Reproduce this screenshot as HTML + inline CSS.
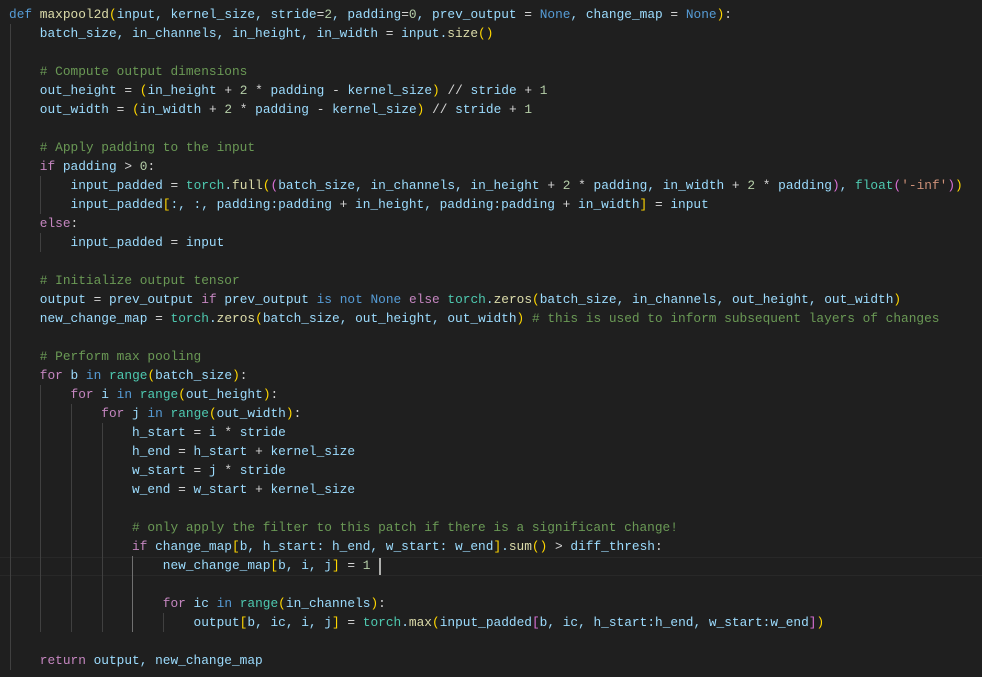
<!DOCTYPE html>
<html><head><meta charset="utf-8"><style>
body{margin:0;background:#1f1f1f;width:982px;height:677px;overflow:hidden;position:relative}
#c{position:absolute;left:9px;top:5px;font-family:"Liberation Mono",monospace;font-size:12.82px;line-height:19px;color:#9cdcfe}
.l{height:19px;white-space:pre}
.k{color:#569cd6}.p{color:#c586c0}.f{color:#dcdcaa}.t{color:#4ec9b0}.c{color:#6a9955}.n{color:#b5cea8}.s{color:#ce9178}.o{color:#d4d4d4}
.b1{color:#ffd700}.b2{color:#da70d6}.b3{color:#179fff}
.g{position:absolute;width:1px;background:#404040}
.hl{position:absolute;left:0;width:982px;top:557px;height:17px;border-top:1px solid #282828;border-bottom:1px solid #282828}
.cur{position:absolute;left:379px;top:558px;width:2px;height:17px;background:#aeafad}
</style></head><body>
<div class="hl"></div>
<div class="g" style="left:10px;top:24px;height:646px"></div>
<div class="g" style="left:40px;top:176px;height:38px"></div>
<div class="g" style="left:40px;top:233px;height:19px"></div>
<div class="g" style="left:40px;top:385px;height:247px"></div>
<div class="g" style="left:71px;top:404px;height:228px"></div>
<div class="g" style="left:102px;top:423px;height:209px"></div>
<div class="g" style="left:132px;top:556px;height:76px;background:#707070"></div>
<div class="g" style="left:163px;top:613px;height:19px"></div>
<div class="cur"></div>
<div id="c"><div class="l"><span class="k">def</span> <span class="f">maxpool2d</span><span class="b1">(</span>input, kernel_size, stride<span class="o">=</span><span class="n">2</span>, padding<span class="o">=</span><span class="n">0</span>, prev_output <span class="o">=</span> <span class="k">None</span>, change_map <span class="o">=</span> <span class="k">None</span><span class="b1">)</span><span class="o">:</span></div><div class="l">    batch_size, in_channels, in_height, in_width <span class="o">=</span> input.<span class="f">size</span><span class="b1">()</span></div><div class="l"> </div><div class="l">    <span class="c"># Compute output dimensions</span></div><div class="l">    out_height <span class="o">=</span> <span class="b1">(</span>in_height <span class="o">+</span> <span class="n">2</span> <span class="o">*</span> padding <span class="o">-</span> kernel_size<span class="b1">)</span> <span class="o">//</span> stride <span class="o">+</span> <span class="n">1</span></div><div class="l">    out_width <span class="o">=</span> <span class="b1">(</span>in_width <span class="o">+</span> <span class="n">2</span> <span class="o">*</span> padding <span class="o">-</span> kernel_size<span class="b1">)</span> <span class="o">//</span> stride <span class="o">+</span> <span class="n">1</span></div><div class="l"> </div><div class="l">    <span class="c"># Apply padding to the input</span></div><div class="l">    <span class="p">if</span> padding <span class="o">&gt;</span> <span class="n">0</span><span class="o">:</span></div><div class="l">        input_padded <span class="o">=</span> <span class="t">torch</span>.<span class="f">full</span><span class="b1">(</span><span class="b2">(</span>batch_size, in_channels, in_height <span class="o">+</span> <span class="n">2</span> <span class="o">*</span> padding, in_width <span class="o">+</span> <span class="n">2</span> <span class="o">*</span> padding<span class="b2">)</span>, <span class="t">float</span><span class="b2">(</span><span class="s">'-inf'</span><span class="b2">)</span><span class="b1">)</span></div><div class="l">        input_padded<span class="b1">[</span>:, :, padding:padding <span class="o">+</span> in_height, padding:padding <span class="o">+</span> in_width<span class="b1">]</span> <span class="o">=</span> input</div><div class="l">    <span class="p">else</span><span class="o">:</span></div><div class="l">        input_padded <span class="o">=</span> input</div><div class="l"> </div><div class="l">    <span class="c"># Initialize output tensor</span></div><div class="l">    output <span class="o">=</span> prev_output <span class="p">if</span> prev_output <span class="k">is</span> <span class="k">not</span> <span class="k">None</span> <span class="p">else</span> <span class="t">torch</span>.<span class="f">zeros</span><span class="b1">(</span>batch_size, in_channels, out_height, out_width<span class="b1">)</span></div><div class="l">    new_change_map <span class="o">=</span> <span class="t">torch</span>.<span class="f">zeros</span><span class="b1">(</span>batch_size, out_height, out_width<span class="b1">)</span> <span class="c"># this is used to inform subsequent layers of changes</span></div><div class="l"> </div><div class="l">    <span class="c"># Perform max pooling</span></div><div class="l">    <span class="p">for</span> b <span class="k">in</span> <span class="t">range</span><span class="b1">(</span>batch_size<span class="b1">)</span><span class="o">:</span></div><div class="l">        <span class="p">for</span> i <span class="k">in</span> <span class="t">range</span><span class="b1">(</span>out_height<span class="b1">)</span><span class="o">:</span></div><div class="l">            <span class="p">for</span> j <span class="k">in</span> <span class="t">range</span><span class="b1">(</span>out_width<span class="b1">)</span><span class="o">:</span></div><div class="l">                h_start <span class="o">=</span> i <span class="o">*</span> stride</div><div class="l">                h_end <span class="o">=</span> h_start <span class="o">+</span> kernel_size</div><div class="l">                w_start <span class="o">=</span> j <span class="o">*</span> stride</div><div class="l">                w_end <span class="o">=</span> w_start <span class="o">+</span> kernel_size</div><div class="l"> </div><div class="l">                <span class="c"># only apply the filter to this patch if there is a significant change!</span></div><div class="l">                <span class="p">if</span> change_map<span class="b1">[</span>b, h_start: h_end, w_start: w_end<span class="b1">]</span>.<span class="f">sum</span><span class="b1">()</span> <span class="o">&gt;</span> diff_thresh<span class="o">:</span></div><div class="l">                    new_change_map<span class="b1">[</span>b, i, j<span class="b1">]</span> <span class="o">=</span> <span class="n">1</span> </div><div class="l"> </div><div class="l">                    <span class="p">for</span> ic <span class="k">in</span> <span class="t">range</span><span class="b1">(</span>in_channels<span class="b1">)</span><span class="o">:</span></div><div class="l">                        output<span class="b1">[</span>b, ic, i, j<span class="b1">]</span> <span class="o">=</span> <span class="t">torch</span>.<span class="f">max</span><span class="b1">(</span>input_padded<span class="b2">[</span>b, ic, h_start:h_end, w_start:w_end<span class="b2">]</span><span class="b1">)</span></div><div class="l"> </div><div class="l">    <span class="p">return</span> output, new_change_map</div></div>
</body></html>
